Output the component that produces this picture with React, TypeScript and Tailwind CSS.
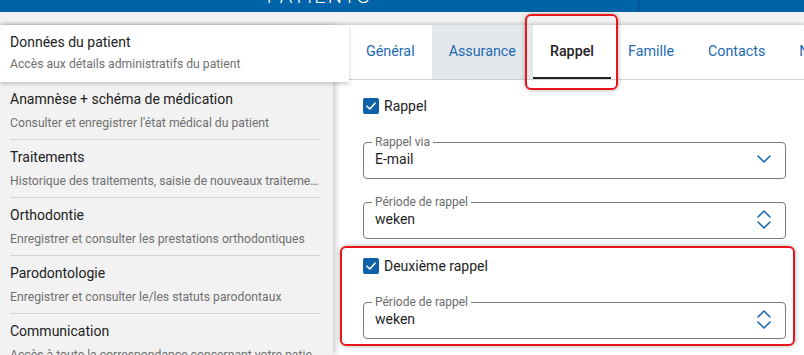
import type { ReactNode } from "react";

type NavItem = { title: string; subtitle: string };

const navItems: NavItem[] = [
  { title: "Anamnèse + schéma de médication", subtitle: "Consulter et enregistrer l'état médical du patient" },
  { title: "Traitements", subtitle: "Historique des traitements, saisie de nouveaux traitements et prestations" },
  { title: "Orthodontie", subtitle: "Enregistrer et consulter les prestations orthodontiques" },
  { title: "Parodontologie", subtitle: "Enregistrer et consulter le/les statuts parodontaux" },
  { title: "Communication", subtitle: "Accès à toute la correspondance concernant votre patient et ses proches" },
];

const tabs = ["Général", "Assurance", "Rappel", "Famille", "Contacts", "Notes"];

function Checkbox({ label }: { label: string }) {
  return (
    <label className="flex h-[16px] items-center gap-[5px]">
      <span className="flex h-[16px] w-[16px] items-center justify-center rounded-[2px] bg-[#0b62a8]">
        <svg width="12" height="12" viewBox="0 0 12 12" fill="none">
          <polyline points="2,6.2 4.8,9 10,3.2" stroke="white" strokeWidth="1.6" strokeLinecap="round" strokeLinejoin="round" />
        </svg>
      </span>
      <span className="text-[14px] leading-[16px] text-[#222]">{label}</span>
    </label>
  );
}

function ChevronDown() {
  return (
    <svg width="14" height="8" viewBox="0 0 14 8" fill="none">
      <polyline points="1,1 7,7 13,1" stroke="#1d6ab3" strokeWidth="1.6" strokeLinecap="round" strokeLinejoin="round" />
    </svg>
  );
}

function ChevronUpDown() {
  return (
    <svg width="14" height="19" viewBox="0 0 14 19" fill="none">
      <polyline points="1,7 7,1 13,7" stroke="#1d6ab3" strokeWidth="1.6" strokeLinecap="round" strokeLinejoin="round" />
      <polyline points="1,12 7,18 13,12" stroke="#1d6ab3" strokeWidth="1.6" strokeLinecap="round" strokeLinejoin="round" />
    </svg>
  );
}

function Field({ label, value, icon, className }: { label: string; value: string; icon: ReactNode; className?: string }) {
  return (
    <fieldset className={`rounded-[4px] border border-[#7a7a7a] pb-[9px] pl-[8px] pr-[14px] ${className ?? ""}`}>
      <legend className="px-[3px] text-[12px] leading-[14px] text-[#6b6b6b]">{label}</legend>
      <div className="flex h-[20px] items-center justify-between pl-[3px]">
        <span className="text-[14px] text-[#1f1f1f]">{value}</span>
        {icon}
      </div>
    </fieldset>
  );
}

export default function App() {
  return (
    <div className="relative h-[355px] w-[804px] overflow-hidden bg-white font-['Roboto',sans-serif]">
      {/* Top bar */}
      <div className="flex h-[12px] overflow-hidden bg-[#0062a7]">
        <div className="flex w-[638px] justify-center">
          <span className="mt-[-14px] text-[20px] font-light leading-[20px] tracking-[2px] text-white">PATIENTS</span>
        </div>
        <div className="flex-1 border-l border-[#0a4c80]" />
      </div>
      <div className="h-[13px] bg-[#f2f2f2]" />

      {/* Main */}
      <div className="relative flex h-[330px] bg-white shadow-[0_-2px_3px_rgba(0,0,0,0.14)]">
        {/* Sidebar */}
        <div className="relative z-10 w-[333px] shrink-0 bg-[#f2f2f2] shadow-[3px_0_5px_rgba(0,0,0,0.18)]">
          <div className="relative z-20 h-[57px] w-[349px] bg-white px-[10px] pt-[7px] shadow-[0_2px_4px_rgba(0,0,0,0.2)]">
            <div className="text-[14px] leading-[20px] text-[#212121]">Données du patient</div>
            <div className="mt-[4px] text-[12.2px] leading-[16px] text-[#707070]">Accès aux détails administratifs du patient</div>
          </div>
          <div className="pl-[10px] pr-[12px]">
            {navItems.map((item) => (
              <div key={item.title} className="border-b border-[#d4d4d4] pb-[8px] pt-[7px]">
                <div className="text-[14px] leading-[20px] text-[#212121]">{item.title}</div>
                <div className="mt-[6px] truncate text-[12.2px] leading-[16px] text-[#707070]">{item.subtitle}</div>
              </div>
            ))}
          </div>
        </div>

        {/* Content */}
        <div className="ml-[16px] min-w-0 flex-1">
          <div className="flex h-[55px] overflow-hidden border-b border-[#cfcfcf]">
            {tabs.map((tab) =>
              tab === "Rappel" ? (
                <div key={tab} className="flex shrink-0 items-center border-b-2 border-[#222] px-[17px] pt-[2px] text-[14.3px] font-medium text-[#222]">
                  {tab}
                </div>
              ) : (
                <div
                  key={tab}
                  className={`flex shrink-0 items-center px-[17px] text-[14.3px] text-[#1d6ab3] ${tab === "Assurance" ? "bg-[#e4e8ec]" : ""}`}
                >
                  {tab}
                </div>
              )
            )}
          </div>

          <div className="pl-[14px] pr-[18px] pt-[18px]">
            <Checkbox label="Rappel" />
            <Field className="mt-[21px]" label="Rappel via" value="E-mail" icon={<ChevronDown />} />
            <Field className="mt-[16px]" label="Période de rappel" value="weken" icon={<ChevronUpDown />} />
            <div className="mt-[19px]">
              <Checkbox label="Deuxième rappel" />
            </div>
            <Field className="mt-[21px]" label="Période de rappel" value="weken" icon={<ChevronUpDown />} />
          </div>
        </div>
      </div>

      {/* Highlight boxes */}
      <div className="absolute left-[525px] top-[14px] h-[76px] w-[93px] rounded-[6px] border-2 border-[#e8161b] shadow-[0_0_5px_rgba(0,0,0,0.3)]" />
      <div className="absolute left-[340px] top-[246px] h-[100px] w-[455px] rounded-[6px] border-2 border-[#e8161b] shadow-[0_0_5px_rgba(0,0,0,0.3)]" />
    </div>
  );
}
